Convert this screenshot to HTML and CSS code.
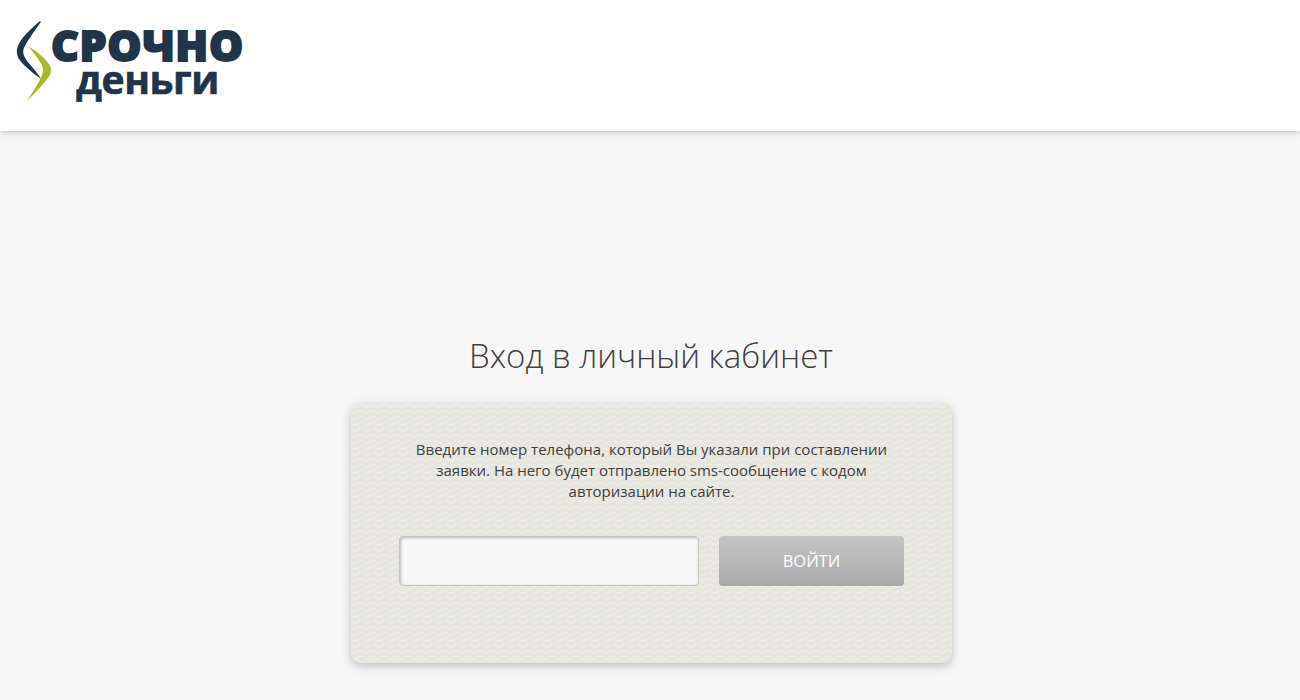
FILE: index.html
```html
<!DOCTYPE html>
<html lang="ru">
<head>
    <meta charset="UTF-8">
    <meta name="viewport" content="width=device-width, initial-scale=1.0">
    <title>Вход в личный кабинет</title>
    <link rel="stylesheet" href="styles.css">
</head>
<body>
    <header class="site-header">
        <a class="logo" href="#">
            <svg class="logo-mark" width="38" height="82" viewBox="0 0 38 82">
                <path fill="#22344a" d="M24 1 C15 9 3 19 1 29 C0 36 3 40 9 46 C14 51 20 55 25 59 C21 52 16 47 11 41 C7 35 6 31 9 26 C12 20 19 10 25 2 Z"/>
                <path fill="#a9b92c" d="M12 26 C20 31 30 38 34 46 C36 50 35 54 32 58 C26 66 18 74 11 81 C16 73 23 63 26 55 C28 50 27 46 24 42 C21 37 17 32 12 26 Z"/>
            </svg>
            <span class="logo-text">
                <span class="logo-top">СРОЧНО</span>
                <span class="logo-bottom">деньги</span>
            </span>
        </a>
    </header>

    <main class="login">
        <h1 class="login-title">Вход в личный кабинет</h1>
        <form class="login-card">
            <p class="login-hint">Введите номер телефона, который Вы указали при составлении заявки. На него будет отправлено sms-сообщение с кодом авторизации на сайте.</p>
            <div class="login-row">
                <input class="phone-input" type="text">
                <button class="login-button" type="button">ВОЙТИ</button>
            </div>
        </form>
    </main>
</body>
</html>
```

FILE: styles.css
```css
html, body {
    height: 100%;
}

body {
    margin: 0;
    overflow: hidden;
    background-color: #f7f7f7;
    font-family: "Open Sans", "Noto Sans", sans-serif;
    color: #3c3c3c;
}

.site-header {
    height: 131px;
    box-sizing: border-box;
    padding: 20px 0 0 16px;
    background-color: #fff;
    box-shadow: 0 1px 6px rgba(120, 135, 155, 0.55);
}

.logo {
    display: flex;
    align-items: flex-start;
    text-decoration: none;
}

.logo-mark {
    flex-shrink: 0;
}

.logo-text {
    display: flex;
    flex-direction: column;
    color: #22344a;
    font-family: "Open Sans", sans-serif;
}

.logo-top {
    margin: 8px 0 0 -3px;
    font-size: 43px;
    font-weight: 800;
    line-height: 34px;
    letter-spacing: 0.6px;
    -webkit-text-stroke: 1.8px #22344a;
}

.logo-bottom {
    margin: 2px 0 0 22px;
    font-size: 39px;
    font-weight: 700;
    line-height: 30px;
    letter-spacing: -0.4px;
    -webkit-text-stroke: 0.6px #22344a;
}

.login {
    display: flex;
    flex-direction: column;
    align-items: center;
    padding-top: 202px;
}

.login-title {
    margin: 0 0 24px 2px;
    font-size: 33px;
    line-height: 46px;
    font-weight: 300;
    color: #3f3f3f;
}

.login-card {
    width: 601px;
    height: 260px;
    box-sizing: border-box;
    margin-left: 3px;
    padding: 36px 48px 0;
    border-radius: 10px;
    background-color: #e6e6de;
    background-image: url("data:image/svg+xml,%3Csvg xmlns='http://www.w3.org/2000/svg' width='12' height='6'%3E%3Cpath d='M0 1.5 Q3 6 6 3 T12 1.5' fill='none' stroke='%23eeeee8' stroke-width='1.2'/%3E%3C/svg%3E");
    box-shadow: 0 3px 10px rgba(110, 120, 135, 0.45);
}

.login-hint {
    margin: 0 auto 34px;
    width: 490px;
    font-size: 15px;
    line-height: 21px;
    text-align: center;
    color: #404040;
}

.login-row {
    display: flex;
    gap: 20px;
}

.phone-input {
    width: 300px;
    height: 50px;
    box-sizing: border-box;
    border: 1px solid #c4c4bd;
    border-radius: 4px;
    background-color: #f7f7f8;
    box-shadow: inset 1px 1px 3px rgba(0, 0, 0, 0.25);
}

.login-button {
    width: 185px;
    height: 50px;
    padding-bottom: 2px;
    border: none;
    border-radius: 4px;
    background: linear-gradient(#c5c5c5, #a9a9ab);
    color: #fff;
    font-family: inherit;
    font-size: 16.5px;
    cursor: pointer;
}
```
